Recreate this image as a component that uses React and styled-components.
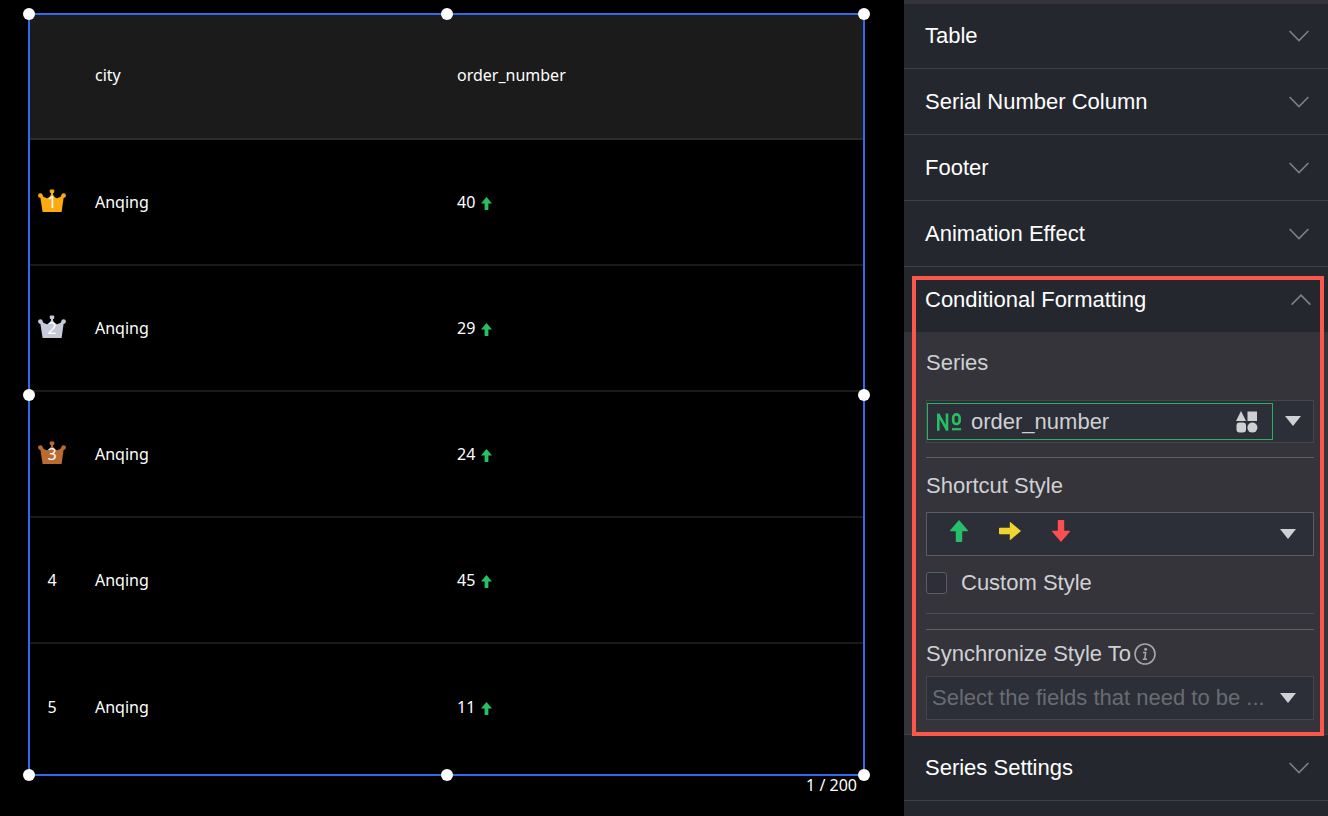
import React, { useState } from "react";
import styled, { createGlobalStyle } from "styled-components";

const rows = [
  { rank: 1, city: "Anqing", order: 40, crown: "#fbab0f" },
  { rank: 2, city: "Anqing", order: 29, crown: "#c5cad8" },
  { rank: 3, city: "Anqing", order: 24, crown: "#b96b32" },
  { rank: 4, city: "Anqing", order: 45 },
  { rank: 5, city: "Anqing", order: 11 },
];

const handles = [
  ["0%", "0%"],
  ["50%", "0%"],
  ["100%", "0%"],
  ["0%", "50%"],
  ["100%", "50%"],
  ["0%", "100%"],
  ["50%", "100%"],
  ["100%", "100%"],
];

function Crown({ color }) {
  return (
    <CrownSvg width="28" height="24" viewBox="0 0 28 24" fill={color}>
      <path d="M2.2 7.6 L3.8 6 Q6.4 9.4 9.2 9.2 Q11.6 8.8 13 5.4 V3.6 H15 V5.4 Q16.4 8.8 18.8 9.2 Q21.6 9.4 24.2 6 L25.8 7.6 L23.6 23 H4.6 Z" />
      <rect x="11.8" y="0.4" width="4.4" height="3.6" rx="0.8" />
      <circle cx="2.4" cy="6.6" r="2.3" />
      <circle cx="25.6" cy="6.6" r="2.3" />
    </CrownSvg>
  );
}

function Arrow({ color, turn = 0, size = 22 }) {
  return (
    <svg width={size} height={size} viewBox="0 0 22 22" fill={color}>
      <path
        transform={`rotate(${turn} 11 11)`}
        d="M11 0 L20 10.6 Q20 11.2 19.4 11.2 H14.2 V21.2 Q14.2 22 13.4 22 H8.6 Q7.8 22 7.8 21.2 V11.2 H2.6 Q2 11.2 2 10.6 Z"
      />
    </svg>
  );
}

function Chevron({ open }) {
  return (
    <svg width="20" height="12" viewBox="0 0 20 12" fill="none" stroke="#7d8089" strokeWidth="1.6">
      <path d={open ? "M0.6 10.6 L10 1.2 L19.4 10.6" : "M0.6 1 L10 10.6 L19.4 1"} />
    </svg>
  );
}

function Caret() {
  return (
    <svg width="16" height="10" viewBox="0 0 16 10" fill="#d0d1d4">
      <path d="M0 0 H16 L8 10 Z" />
    </svg>
  );
}

function NumberIcon() {
  return (
    <svg width="26" height="18" viewBox="0 0 26 18" fill="none" stroke="#27bf63" strokeWidth="2.6">
      <path d="M2.3 17.8 V0.4 M11 17.8 V0.4 M2.4 1.4 L10.9 16.6" />
      <rect x="17.2" y="1.4" width="6.4" height="9.6" rx="3.1" />
      <path d="M16 16.2 H25" strokeWidth="2.2" />
    </svg>
  );
}

function ShapesIcon() {
  return (
    <svg width="22" height="22" viewBox="0 0 22 22" fill="#cfd0d3">
      <path d="M5 0 L10 10 H0 Z" />
      <rect x="11.5" y="0.5" width="9.5" height="9.5" />
      <rect x="0.5" y="11.5" width="9.5" height="10" rx="3" />
      <circle cx="16.4" cy="16.6" r="5" />
    </svg>
  );
}

function InfoIcon() {
  return (
    <svg width="22" height="22" viewBox="0 0 22 22" fill="none" stroke="#a5a6aa">
      <circle cx="11" cy="11" r="10" strokeWidth="1.6" />
      <circle cx="11.6" cy="6.2" r="1.5" fill="#a5a6aa" stroke="none" />
      <path d="M9 9.6 H11.6 L10.8 16 M8.8 16.2 H13" strokeWidth="1.5" />
    </svg>
  );
}

function Section({ title, open, onToggle, children }) {
  return (
    <SectionBox>
      <SectionHeader type="button" aria-expanded={!!open} onClick={onToggle} $open={open}>
        {title}
        <Chevron open={open} />
      </SectionHeader>
      {open && children}
    </SectionBox>
  );
}

export default function App() {
  const [open, setOpen] = useState(true);
  const [custom, setCustom] = useState(false);
  return (
    <>
      <GlobalStyle />
      <Page>
        <Canvas>
          <Frame>
            <DataTable>
              <colgroup>
                <col className="rank" />
                <col className="city" />
                <col />
              </colgroup>
              <thead>
                <tr>
                  <th></th>
                  <th>city</th>
                  <th>order_number</th>
                </tr>
              </thead>
              <tbody>
                {rows.map((row) => (
                  <tr key={row.rank}>
                    <td>
                      <Rank>
                        {row.crown && <Crown color={row.crown} />}
                        <span>{row.rank}</span>
                      </Rank>
                    </td>
                    <td>{row.city}</td>
                    <td>
                      <Value>
                        {row.order}
                        <Arrow color="#27bf63" size={13} />
                      </Value>
                    </td>
                  </tr>
                ))}
              </tbody>
            </DataTable>
            <Handles>
              {handles.map(([x, y]) => (
                <Handle key={x + y} $x={x} $y={y} />
              ))}
            </Handles>
          </Frame>
          <Pager>1 / 200</Pager>
        </Canvas>
        <Panel>
          <Section title="Table" />
          <Section title="Serial Number Column" />
          <Section title="Footer" />
          <Section title="Animation Effect" />
          <Section title="Conditional Formatting" open={open} onToggle={() => setOpen(!open)}>
            <SectionBody>
              <Label id="series">Series</Label>
              <Field>
                <Tag type="button" aria-labelledby="series">
                  <NumberIcon />
                  <span>order_number</span>
                  <ShapesIcon />
                </Tag>
                <CaretButton type="button" aria-label="Choose series">
                  <Caret />
                </CaretButton>
              </Field>
              <Divider />
              <Label id="shortcut">Shortcut Style</Label>
              <StyleSelect type="button" aria-labelledby="shortcut">
                <Arrows>
                  <Arrow color="#27bf6b" />
                  <Arrow color="#efd52d" turn={90} />
                  <Arrow color="#fb4f50" turn={180} />
                </Arrows>
                <Caret />
              </StyleSelect>
              <CheckLabel>
                <input type="checkbox" checked={custom} onChange={() => setCustom(!custom)} />
                Custom Style
              </CheckLabel>
              <Divider $faint />
              <Divider $tight />
              <SyncLabel id="sync">
                Synchronize Style To
                <InfoIcon />
              </SyncLabel>
              <SyncSelect type="button" aria-labelledby="sync">
                <span>Select the fields that need to be ...</span>
                <Caret />
              </SyncSelect>
            </SectionBody>
            <Highlight />
          </Section>
          <Section title="Series Settings" />
        </Panel>
      </Page>
    </>
  );
}

const GlobalStyle = createGlobalStyle`
  * {
    box-sizing: border-box;
  }
  body {
    margin: 0;
    background: #000;
  }
  button {
    font: inherit;
    color: inherit;
    text-align: left;
    cursor: pointer;
  }
  svg {
    display: block;
    flex: none;
  }
`;

const Page = styled.div`
  display: grid;
  grid-template-columns: 1fr 424px;
  min-height: 100vh;
`;

const Canvas = styled.main`
  padding: 13px 39px 0 28px;
  background: #000;
  color: #fff;
  font: 16px/24px "Noto Sans", sans-serif;
`;

const Frame = styled.div`
  position: relative;
  border: 2px solid #2f6bea;
  padding-bottom: 4px;
`;

const DataTable = styled.table`
  width: 100%;
  table-layout: fixed;
  border-spacing: 0;
  .rank {
    width: 44px;
  }
  .city {
    width: 362px;
  }
  th,
  td {
    height: 126px;
    padding: 0 0 0 21px;
    text-align: left;
    font-weight: normal;
    border-bottom: 2px solid #191919;
  }
  th {
    height: 125px;
    padding-bottom: 3px;
    background: #1b1b1b;
    border-color: #2b2b2b;
  }
  td:first-child {
    padding: 0;
  }
  tbody tr:last-child td {
    border: 0;
  }
`;

const Rank = styled.div`
  display: grid;
  place-items: center;
  > * {
    grid-area: 1 / 1;
  }
  span {
    z-index: 1;
  }
`;

const CrownSvg = styled.svg`
  margin-bottom: 3px;
`;

const Value = styled.div`
  display: flex;
  align-items: center;
  gap: 5px;
  svg {
    margin-top: 2px;
  }
`;

const Handles = styled.div`
  position: absolute;
  inset: -1px;
  pointer-events: none;
`;

const Handle = styled.i`
  position: absolute;
  left: ${(p) => p.$x};
  top: ${(p) => p.$y};
  width: 12px;
  height: 12px;
  border-radius: 50%;
  background: #fff;
  transform: translate(-50%, -50%);
`;

const Pager = styled.div`
  padding-right: 8px;
  line-height: 18px;
  text-align: right;
`;

const Panel = styled.aside`
  border-top: 3px solid #34343a;
  box-shadow: inset 0 1px #34343a;
  background: #25272e;
  color: #fff;
  font: 22px/26px "Liberation Sans", Arial, sans-serif;
`;

const SectionBox = styled.section`
  position: relative;
  border-bottom: 1px solid #3d4048;
`;

const SectionHeader = styled.button`
  display: flex;
  align-items: center;
  justify-content: space-between;
  width: 100%;
  height: 65px;
  padding: 0 ${(p) => (p.$open ? 17 : 19)}px 0 21px;
  border: 0;
  background: none;
`;

const SectionBody = styled.div`
  display: flex;
  flex-direction: column;
  padding: 18px 14px 14px 22px;
  background: #34343a;
  color: #cfd0d3;
`;

const Label = styled.div`
  line-height: 26px;
`;

const Field = styled.div`
  display: flex;
  align-items: center;
  margin: 24px 0 14px;
  height: 43px;
  border: 1px solid #43464d;
  background: #2c2f37;
`;

const Tag = styled.button`
  display: flex;
  align-items: center;
  flex: 1;
  height: 37px;
  padding: 0 14px 0 8px;
  border: 1px solid #27b25d;
  background: none;
  span {
    flex: 1;
    padding-left: 9px;
  }
`;

const CaretButton = styled.button`
  padding: 0 12px 2px;
  border: 0;
  background: none;
`;

const Divider = styled.hr`
  width: 100%;
  margin: 0 0 ${(p) => (p.$tight ? 11 : 15)}px;
  border: 0;
  border-top: 1px solid ${(p) => (p.$faint ? "#4d4e55" : "#5e5f64")};
`;

const StyleSelect = styled.button`
  display: flex;
  align-items: center;
  justify-content: space-between;
  height: 44px;
  margin: 13px 0 14px;
  padding: 0 17px 0 21px;
  border: 1px solid #5c5d61;
  background: #2c2f37;
`;

const Arrows = styled.span`
  display: flex;
  gap: 29px;
  padding-bottom: 6px;
`;

const CheckLabel = styled.label`
  display: flex;
  align-items: center;
  gap: 14px;
  margin-bottom: 17px;
  input {
    appearance: none;
    width: 21px;
    height: 22px;
    margin: 0;
    border: 1px solid #5c5d61;
    border-radius: 3px;
    background: #2c2f37;
  }
  input:checked {
    background: #27bf63;
  }
`;

const SyncLabel = styled(Label)`
  display: flex;
  align-items: center;
  gap: 3px;
`;

const SyncSelect = styled(StyleSelect)`
  margin: 9px 0 0;
  padding: 0 17px 0 5px;
  border-color: #43464d;
  span {
    color: #696b73;
  }
`;

const Highlight = styled.div`
  position: absolute;
  inset: 9px 4px -2px 8px;
  border: 4px solid #fc574b;
  pointer-events: none;
  z-index: 1;
`;
